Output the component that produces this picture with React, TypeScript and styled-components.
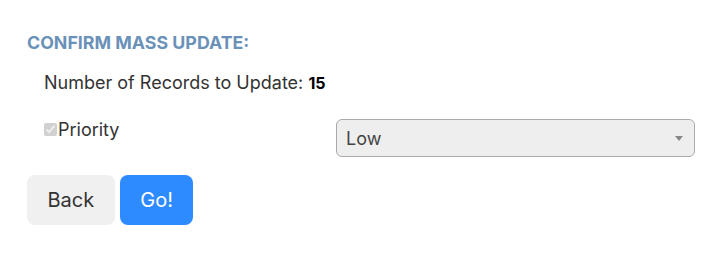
import React from "react";
import styled, { createGlobalStyle } from "styled-components";

const GlobalStyle = createGlobalStyle`
  body {
    margin: 0;
    background: #fff;
    font-family: Inter, "Noto Sans", sans-serif;
  }
`;

const MassUpdate = () => {
  return (
    <Wrapper>
      <GlobalStyle />
      <Title>Confirm Mass Update:</Title>
      <Count>
        Number of Records to Update: <b>15</b>
      </Count>
      <FieldRow>
        <FieldLabel>
          <input type="checkbox" checked disabled readOnly />
          Priority
        </FieldLabel>
        <SelectWrap>
          <Select defaultValue="low">
            <option value="low">Low</option>
            <option value="medium">Medium</option>
            <option value="high">High</option>
          </Select>
          <Caret />
        </SelectWrap>
      </FieldRow>
      <Actions>
        <Button>Back</Button>
        <Button $primary>Go!</Button>
      </Actions>
    </Wrapper>
  );
};

const Wrapper = styled.div`
  padding: 32px 24px 0 27px;
  width: 719px;
  box-sizing: border-box;
`;

const Title = styled.h3`
  margin: 0;
  font-size: 17.8px;
  font-weight: 700;
  text-transform: uppercase;
  color: #6a91b8;
  line-height: 22px;
`;

const Count = styled.div`
  margin: 18px 0 0 17px;
  font-size: 18px;
  color: #333;
  line-height: 22px;

  b {
    color: #000;
    font-size: 16px;
  }
`;

const FieldRow = styled.div`
  display: grid;
  grid-template-columns: 292px 376px;
  margin-top: 25px;
  align-items: start;
`;

const FieldLabel = styled.label`
  display: flex;
  align-items: center;
  padding: 0 0 0 17px;
  font-size: 18px;
  color: #333;

  input {
    width: 13px;
    height: 13px;
    margin: 0 1px 0 0;
    accent-color: #ccc;
  }
`;

const SelectWrap = styled.div`
  position: relative;
  margin-left: 17px;
`;

const Select = styled.select`
  appearance: none;
  box-sizing: border-box;
  width: 100%;
  height: 38px;
  padding: 0 24px 0 9px;
  border: 1px solid #aaa;
  border-radius: 6px;
  background: #eee;
  font-family: inherit;
  font-size: 18px;
  color: #444;
`;

const Caret = styled.span`
  position: absolute;
  right: 12px;
  top: 17px;
  border-left: 4px solid transparent;
  border-right: 4px solid transparent;
  border-top: 5px solid #888;
  pointer-events: none;
`;

const Actions = styled.div`
  display: flex;
  gap: 5px;
  margin-top: 18px;
`;

const Button = styled.button<{ $primary?: boolean }>`
  height: 50px;
  padding: 0 20.5px;
  border: none;
  border-radius: 8px;
  font-family: inherit;
  font-size: 20px;
  background: ${(p) => (p.$primary ? "#2e8bff" : "#f0f0f0")};
  color: ${(p) => (p.$primary ? "#fff" : "#333")};
`;

export default MassUpdate;
